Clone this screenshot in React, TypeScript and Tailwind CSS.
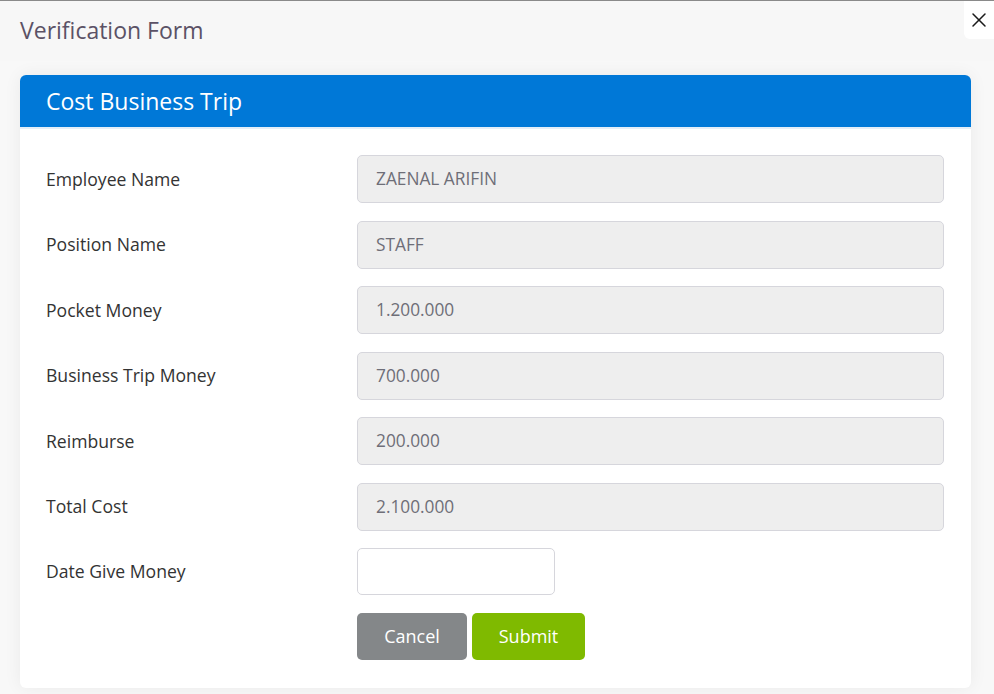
import { X } from "lucide-react";

const fields = [
  { label: "Employee Name", value: "ZAENAL ARIFIN" },
  { label: "Position Name", value: "STAFF" },
  { label: "Pocket Money", value: "1.200.000" },
  { label: "Business Trip Money", value: "700.000" },
  { label: "Reimburse", value: "200.000" },
  { label: "Total Cost", value: "2.100.000" },
];

export default function App() {
  return (
    <div
      className="w-[994px] h-[694px] overflow-hidden bg-[#f8f8f8] border-t border-[#8a8a8a] relative"
      style={{ fontFamily: '"Open Sans", sans-serif' }}
    >
      <div className="h-[60px] bg-[#f7f7f7] flex items-center px-5">
        <h1 className="text-[23px] text-[#5b5266] -mt-[2px]">Verification Form</h1>
      </div>

      <button className="absolute -top-px right-0 w-[30px] h-[39px] bg-white rounded-bl-md flex items-center justify-center text-[#1a1a1a]">
        <X className="w-[24px] h-[24px]" strokeWidth={1.5} />
      </button>

      <div className="pt-[14px] px-5">
        <div className="w-[951px] bg-white rounded-md shadow-[0_0_18px_rgba(0,0,0,0.06)] overflow-hidden">
          <div className="h-[54px] bg-[#0078d7] flex items-center px-[26px] border-b-2 border-[#e4eef8]">
            <h2 className="text-[23px] text-white">Cost Business Trip</h2>
          </div>

          <div className="pt-[26px] pb-[28px] pl-[26px] pr-[27px]">
            <div className="flex flex-col gap-[17.5px]">
              {fields.map((f) => (
                <div key={f.label} className="flex items-center">
                  <label className="w-[311px] text-[17.6px] text-[#333]">{f.label}</label>
                  <div className="flex-1 h-[48px] bg-[#eeeeee] border border-[#d6d6dc] rounded-[5px] flex items-center px-[18px] text-[17.3px] text-[#6e6e78]">
                    {f.value}
                  </div>
                </div>
              ))}
              <div className="flex items-center">
                <label className="w-[311px] text-[17.6px] text-[#333]">Date Give Money</label>
                <input
                  type="text"
                  className="w-[198px] h-[47px] bg-white border border-[#d6d6dc] rounded-[5px] px-3 outline-none"
                />
              </div>
            </div>

            <div className="flex gap-[5px] mt-[18px] ml-[311px]">
              <button className="w-[110px] h-[47px] bg-[#848789] text-white text-[18px] rounded-[5px]">
                Cancel
              </button>
              <button className="w-[113px] h-[47px] bg-[#7fba00] text-white text-[18px] rounded-[5px]">
                Submit
              </button>
            </div>
          </div>
        </div>
      </div>
    </div>
  );
}
